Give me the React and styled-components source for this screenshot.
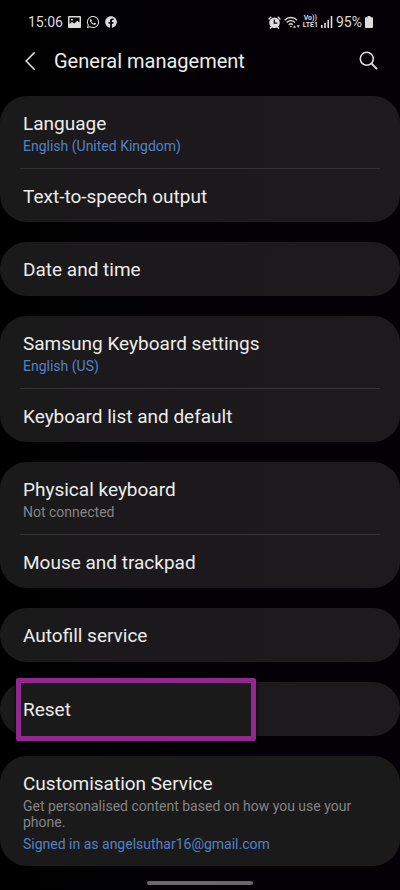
import styled, { createGlobalStyle } from "styled-components";
import { FaFacebook, FaWhatsapp } from "react-icons/fa";

const GlobalStyle = createGlobalStyle`
  * {
    box-sizing: border-box;
  }
  body {
    margin: 0;
    background: #020103;
    font-family: Roboto, "Noto Sans", sans-serif;
  }
`;

const Screen = styled.div`
  display: flex;
  flex-direction: column;
  min-height: 100vh;
  color: #ececec;
  background: linear-gradient(90deg, #000 0%, #030105 60%, #030105 100%);
`;

const StatusBar = styled.div`
  display: flex;
  align-items: center;
  justify-content: space-between;
  height: 44px;
  padding: 0 27px 0 28px;
  font-size: 14px;
  line-height: 20px;
  color: #dcdcdc;
`;

const StatusGroup = styled.div`
  display: flex;
  align-items: center;
  gap: ${({ $gap }) => $gap}px;

  svg {
    display: block;
    flex: none;
  }
`;

const Volte = styled.span`
  display: flex;
  flex-direction: column;
  align-items: center;
  font-size: 7px;
  font-weight: 700;
  line-height: 7px;
`;

const Header = styled.header`
  display: flex;
  align-items: center;
  height: 34px;
  margin-bottom: 18px;
  padding: 0 20px 0 18px;
`;

const IconButton = styled.button`
  display: flex;
  align-items: center;
  justify-content: center;
  width: 24px;
  height: 24px;
  padding: 0;
  border: none;
  background: none;
  color: #dedede;
  cursor: pointer;
`;

const PageTitle = styled.h1`
  flex: 1;
  margin: 0 0 0 12px;
  font-size: 20px;
  font-weight: 400;
  line-height: 28px;
`;

const Main = styled.main`
  display: flex;
  flex-direction: column;
  gap: 20px;
`;

const Card = styled.ul`
  margin: 0;
  padding: 0;
  list-style: none;
  border-radius: 27px;
  background: ${({ $plain }) =>
    $plain ? "#1a1a1a" : "linear-gradient(90deg, #1a1a1a 0%, #1c191c 40%, #1d191e 100%)"};
`;

const Item = styled.li`
  position: relative;

  & + & {
    margin: 0 20px;
    border-top: 1px solid #353336;
  }
  & + & > button {
    min-height: 53px;
    padding: 2px 3px 0;
  }
`;

const Row = styled.button`
  display: flex;
  flex-direction: column;
  align-items: flex-start;
  justify-content: center;
  width: 100%;
  min-height: 54px;
  padding: ${({ $detailed }) => ($detailed ? "16px 23px 14px" : "2px 23px 0")};
  border: none;
  background: none;
  color: inherit;
  font-family: inherit;
  text-align: left;
  cursor: pointer;
`;

const Label = styled.span`
  position: relative;
  z-index: 1;
  font-size: 19px;
  line-height: 24px;
`;

const Detail = styled.span`
  margin-top: ${({ $spaced }) => ($spaced ? 6 : 2)}px;
  font-size: 14px;
  line-height: 16px;
  color: ${({ $accent }) => ($accent ? "#5580c6" : "#858385")};
`;

const Highlight = styled.span`
  position: absolute;
  top: -4px;
  bottom: -5px;
  left: 16px;
  width: 60%;
  border: 5px solid #91278f;
  border-radius: 2px;
  background: #1a1a1a;
  box-shadow: 0 0 4px #000;
  pointer-events: none;
`;

const HomeIndicator = styled.div`
  align-self: center;
  width: 106px;
  height: 4px;
  margin: 15px 0 5px;
  border-radius: 2px;
  background: #6b666b;
`;

const groups = [
  {
    items: [
      { label: "Language", details: [{ text: "English (United Kingdom)", accent: true }] },
      { label: "Text-to-speech output" },
    ],
  },
  { items: [{ label: "Date and time" }] },
  {
    items: [
      { label: "Samsung Keyboard settings", details: [{ text: "English (US)", accent: true }] },
      { label: "Keyboard list and default" },
    ],
  },
  {
    items: [
      { label: "Physical keyboard", details: [{ text: "Not connected" }] },
      { label: "Mouse and trackpad" },
    ],
  },
  { items: [{ label: "Autofill service" }] },
  { items: [{ label: "Reset", highlighted: true }] },
  {
    plain: true,
    items: [
      {
        label: "Customisation Service",
        details: [
          { text: "Get personalised content based on how you use your phone." },
          { text: "Signed in as angelsuthar16@gmail.com", accent: true },
        ],
      },
    ],
  },
];

const PictureIcon = () => (
  <svg width="13" height="12" viewBox="0 0 13 12">
    <path
      fill="currentColor"
      fillRule="evenodd"
      d="M1 0h11a1 1 0 0 1 1 1v10a1 1 0 0 1-1 1H1a1 1 0 0 1-1-1V1a1 1 0 0 1 1-1zm.5 1.500V8l2.600-2L6.300 7.500l3-2.700 2.200 1.700v-5zM3 3h1.800v1.500H3z"
    />
  </svg>
);

const AlarmIcon = () => (
  <svg width="13" height="13" viewBox="0 0 13 13" fill="none">
    <path d="M.6 3.400 3.200.8M12.400 3.400 9.800.8M2 12.500l1.800-2M11 12.500l-1.800-2" stroke="currentColor" strokeWidth="1.400" />
    <circle cx="6.500" cy="6.700" r="5.300" fill="currentColor" />
    <path d="M6.300 3.600v3.600h2.900" stroke="#000" strokeWidth="1.200" />
  </svg>
);

const WifiIcon = () => (
  <svg width="16" height="13" viewBox="0 0 16 13" fill="none" stroke="currentColor" strokeWidth="1.300">
    <path d="M.6 4.200C4 .6 9.700.6 13 4.200M2.700 6.500c2.400-2.500 6-2.500 8.300 0M4.800 8.700c1.300-1.200 2.800-1.200 4 0" />
    <path d="m5.700 10 1.200 1.500L8.100 10z" fill="currentColor" stroke="none" />
    <path d="m9 11.800 1.500-2.600 1.500 2.600zM12.600 9.200l1.600 2.600 1.600-2.600z" fill="currentColor" stroke="none" />
  </svg>
);

const SignalIcon = () => (
  <svg width="12" height="12" viewBox="0 0 12 12" fill="currentColor">
    <path d="M0 9h1.600v3H0zM3.200 7h1.600v5H3.200zM6.400 4H8v8H6.400zM9.700 0h1.600v12H9.700z" />
  </svg>
);

const BatteryIcon = () => (
  <svg width="8" height="12" viewBox="0 0 8 12" fill="currentColor">
    <path d="M2.500 0h3v1.200H7a1 1 0 0 1 1 1V11a1 1 0 0 1-1 1H1a1 1 0 0 1-1-1V2.200a1 1 0 0 1 1-1h1.500z" />
  </svg>
);

const BackIcon = () => (
  <svg width="24" height="24" viewBox="0 0 24 24" fill="none" stroke="currentColor" strokeWidth="1.600">
    <path d="M16.700 3.200 8.200 12l8.500 8.800" />
  </svg>
);

const SearchIcon = () => (
  <svg width="24" height="24" viewBox="0 0 24 24" fill="none" stroke="currentColor" strokeWidth="1.600">
    <circle cx="10.800" cy="9.800" r="6.500" />
    <path d="m15.400 14.400 5.600 5.700" strokeWidth="2" />
  </svg>
);

function App() {
  return (
    <>
      <GlobalStyle />
      <Screen>
        <StatusBar>
          <StatusGroup $gap={5}>
            <span>15:06</span>
            <PictureIcon />
            <FaWhatsapp size={14} />
            <FaFacebook size={12} />
          </StatusGroup>
          <StatusGroup $gap={3}>
            <AlarmIcon />
            <WifiIcon />
            <Volte>
              <span>Vo))</span>
              <span>LTE1</span>
            </Volte>
            <SignalIcon />
            <span>95%</span>
            <BatteryIcon />
          </StatusGroup>
        </StatusBar>

        <Header>
          <IconButton aria-label="Back">
            <BackIcon />
          </IconButton>
          <PageTitle>General management</PageTitle>
          <IconButton aria-label="Search">
            <SearchIcon />
          </IconButton>
        </Header>

        <Main>
          {groups.map(({ items, plain }) => (
            <Card key={items[0].label} $plain={plain}>
              {items.map(({ label, details = [], highlighted }) => (
                <Item key={label}>
                  {highlighted && <Highlight />}
                  <Row $detailed={details.length > 0}>
                    <Label>{label}</Label>
                    {details.map(({ text, accent }, i) => (
                      <Detail key={text} $accent={accent} $spaced={i > 0}>
                        {text}
                      </Detail>
                    ))}
                  </Row>
                </Item>
              ))}
            </Card>
          ))}
        </Main>

        <HomeIndicator />
      </Screen>
    </>
  );
}

export default App;
